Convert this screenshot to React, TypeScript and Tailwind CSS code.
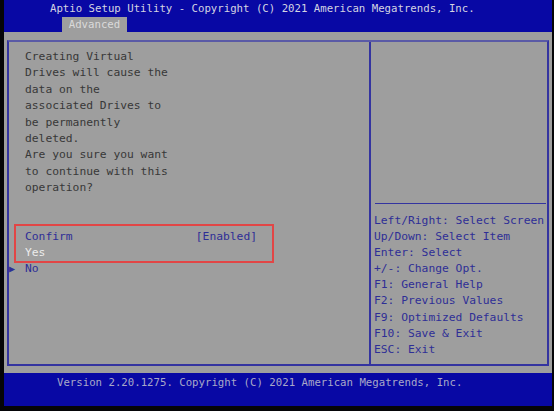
const mono = "font-['DejaVu_Sans_Mono','Liberation_Mono',monospace]";

const notice = [
  "Creating Virtual",
  "Drives will cause the",
  "data on the",
  "associated Drives to",
  "be permanently",
  "deleted.",
  "Are you sure you want",
  "to continue with this",
  "operation?",
];

const helpKeys = [
  "Left/Right: Select Screen",
  "Up/Down: Select Item",
  "Enter: Select",
  "+/-: Change Opt.",
  "F1: General Help",
  "F2: Previous Values",
  "F9: Optimized Defaults",
  "F10: Save & Exit",
  "ESC: Exit",
];

export default function App() {
  return (
    <div
      className={`${mono} flex h-[411px] w-[554px] flex-col overflow-hidden bg-[#050508] pb-[5px] pl-[4px] pr-[2px]`}
    >
      {/* Title bar with the single tab */}
      <header className="flex h-[32px] flex-col bg-[#0808a4]">
        <div className="mt-[2px] h-[14px] whitespace-pre pl-[46px] text-[10.7px] leading-[14px] text-[#d4d4e2]">
          Aptio Setup Utility - Copyright (C) 2021 American Megatrends, Inc.
        </div>
        <div className="ml-[58px] mt-[1px] flex h-[15px] w-[65px] items-center justify-center bg-[#9e9e9e] text-[10.7px] leading-[15px] text-[#dadada]">
          Advanced
        </div>
      </header>

      {/* Main gray body */}
      <main className="flex flex-1 bg-[#9e9e9e] px-[3px] pb-[7px] pt-[8px]">
        <div className="flex flex-1 border-2 border-[#3434a0] border-t-[#5a5aa6]">
          {/* Left: message and options */}
          <section className="relative w-[362px] border-r-2 border-[#3434a0] pl-[16px] pt-[7px] text-[11.3px] leading-[16.4px]">
            {notice.map((line) => (
              <div key={line} className="whitespace-pre text-[#383838]">
                {line}
              </div>
            ))}
            <div className="mt-[32px] flex w-[232px] justify-between text-[#2e2e96]">
              <span>Confirm</span>
              <span>[Enabled]</span>
            </div>
            <div className="text-[#ececec]">Yes</div>
            <div className="relative text-[#2e2e96]">
              <span className="absolute left-[-16px] top-0 text-[10px]">▶</span>
              No
            </div>

            {/* highlight box around the confirm option */}
            <div className="pointer-events-none absolute left-[5px] top-[182px] h-[39px] w-[260px] border-2 border-[#e24646]" />
          </section>

          {/* Right: key help */}
          <aside className="flex flex-1 flex-col pl-[3px]">
            <div className="mx-[1px] mt-[161px] h-px bg-[#3434a0]" />
            <div className="mt-[9px] text-[11.3px] leading-[16.1px] text-[#2e2e96]">
              {helpKeys.map((line) => (
                <div key={line} className="whitespace-pre">
                  {line}
                </div>
              ))}
            </div>
          </aside>
        </div>
      </main>

      {/* Footer */}
      <footer className="h-[33px] bg-[#0808a4] pl-[53px] pt-[3px]">
        <div className="whitespace-pre text-[10.7px] leading-[14px] text-[#a8a8c8]">
          Version 2.20.1275. Copyright (C) 2021 American Megatrends, Inc.
        </div>
      </footer>
    </div>
  );
}
